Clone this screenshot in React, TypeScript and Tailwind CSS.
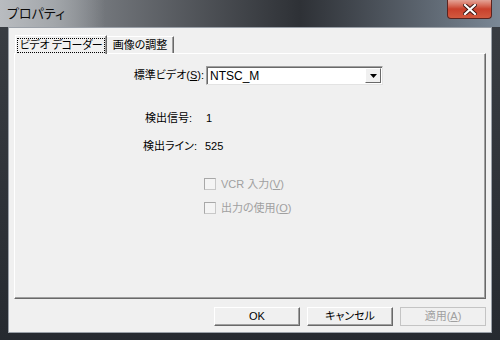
import React from 'react'

const font = "font-['Liberation_Sans','Noto_Sans_CJK_JP',sans-serif] [font-feature-settings:'palt']"

function CheckRow({ label, hot, rest }: { label: string; hot: string; rest: string }) {
  return (
    <div className="flex items-center gap-[5px] text-[#a0a0a0]">
      <span className="w-[12px] h-[12px] border border-[#c8c8c8] border-t-[#a8a8a8] border-l-[#a8a8a8] bg-[#f4f4f4]" />
      <span>
        {label}
        <span className="underline">{hot}</span>
        {rest}
      </span>
    </div>
  )
}

function Btn({ children, disabled }: { children: React.ReactNode; disabled?: boolean }) {
  return (
    <div
      className={
        'w-[86px] h-[19px] flex items-center justify-center border ' +
        (disabled
          ? 'border-[#c4c4c4] text-[#a0a0a0] bg-[#f0f0f0]'
          : 'border-t-[#ffffff] border-l-[#ffffff] border-r-[#696969] border-b-[#696969] bg-[#f0f0f0] shadow-[inset_-1px_-1px_0_#a0a0a0] text-black')
      }
    >
      {children}
    </div>
  )
}

export default function App() {
  return (
    <div className={`w-[500px] h-[340px] flex flex-col bg-gradient-to-b from-[#3a3e44] to-[#262a30] ${font} text-[11px] text-black`}>
      <div className="h-[27px] flex items-start justify-between bg-gradient-to-r from-[#9a9ea3] via-[#2e3136] via-60% to-[#7b8896]">
        <div className="h-[27px] flex items-center pl-[7px] pr-[40px] text-[13px] text-[#0c0c0c] bg-gradient-to-r from-[#b9bcc0] via-[#a3a7ab] to-transparent">
          プロパティ
        </div>
        <div className="mr-[8px] w-[45px] h-[19px] rounded-b-[4px] border border-t-0 border-[#5a2420] bg-gradient-to-b from-[#e3a397] via-[#c9402c] to-[#d2593f] flex items-center justify-center">
          <svg width="14" height="11" viewBox="0 0 14 11">
            <path d="M2 1 L12 10 M12 1 L2 10" stroke="#3a1410" strokeWidth="4" strokeLinecap="square" />
            <path d="M2 1 L12 10 M12 1 L2 10" stroke="#ffffff" strokeWidth="2.2" strokeLinecap="square" />
          </svg>
        </div>
      </div>
      <div className="mx-[8px] mb-[7px] flex-1 bg-[#f0f0f0] border border-[#9aa0a8] flex flex-col px-[5px]">
        <div className="flex items-end h-[25px] pl-[1px]">
          <div className="h-[19px] w-[92px] -mb-px z-10 flex items-center justify-center bg-[#f0f0f0] border border-b-0 border-t-white border-l-white border-r-[#696969] shadow-[inset_-1px_0_0_#a0a0a0]">
            <span className="border border-dotted border-black px-[2px] leading-[13px] whitespace-nowrap tracking-[-0.4px]">ビデオ デコーダー</span>
          </div>
          <div className="h-[17px] w-[67px] flex items-center justify-center border border-b-0 border-l-0 border-t-white border-r-[#696969] shadow-[inset_-1px_0_0_#a0a0a0] whitespace-nowrap">
            画像の調整
          </div>
        </div>
        <div className="h-[246px] border border-t-white border-l-white border-r-[#696969] border-b-[#696969] shadow-[inset_-1px_-1px_0_#a0a0a0] flex flex-col">
          <div className="flex items-center mt-[12px]">
            <div className="w-[191px] text-right pr-[2px]">
              標準ビデオ(<span className="underline">S</span>):
            </div>
            <div className="w-[177px] h-[19px] bg-white border border-t-[#a0a0a0] border-l-[#a0a0a0] border-r-[#e3e3e3] border-b-[#e3e3e3] shadow-[inset_1px_1px_0_#696969] flex items-center">
              <span className="flex-1 pl-[3px] text-[12px]">NTSC_M</span>
              <div className="w-[16px] h-[15px] mr-[1px] bg-[#f0f0f0] border border-t-white border-l-white border-r-[#696969] border-b-[#696969] flex items-center justify-center">
                <svg width="7" height="4" viewBox="0 0 7 4">
                  <path d="M0 0 H7 L3.5 4 Z" fill="#000" />
                </svg>
              </div>
            </div>
          </div>
          <div className="flex mt-[26px] pl-[130px] leading-[14px]">
            <span className="w-[61px]">検出信号:</span>
            <span>1</span>
          </div>
          <div className="flex mt-[14px] pl-[128px] leading-[14px]">
            <span className="w-[62px]">検出ライン:</span>
            <span>525</span>
          </div>
          <div className="flex flex-col gap-[7px] mt-[23px] pl-[189px]">
            <CheckRow label="VCR 入力(" hot="V" rest=")" />
            <CheckRow label="出力の使用(" hot="O" rest=")" />
          </div>
        </div>
        <div className="flex justify-end gap-[7px] mt-[8px]">
          <Btn>OK</Btn>
          <Btn>キャンセル</Btn>
          <Btn disabled>
            適用(<span className="underline">A</span>)
          </Btn>
        </div>
      </div>
    </div>
  )
}
